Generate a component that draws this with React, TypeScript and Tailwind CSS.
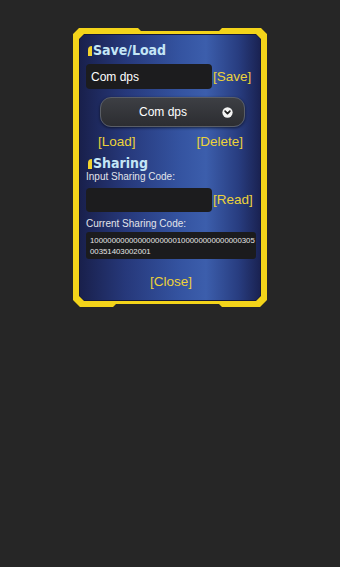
import React from "react";

const frameClip =
  "[clip-path:polygon(6px_0,65px_0,68px_3px,146px_3px,149px_0,188px_0,194px_6px,194px_272px,187px_279px,149px_279px,146px_276px,43px_276px,40px_279px,7px_279px,0_272px,0_6px)]";

function Heading({ children }: { children: React.ReactNode }) {
  return (
    <div className="flex items-center pl-[2px] text-[14px] font-semibold leading-[15px] text-[#c4e6f6] font-['DejaVu_Sans_Condensed','DejaVu_Sans',sans-serif]">
      <span className="mr-[1px] inline-block h-[10px] w-[4px] rounded-tl-[4px] bg-[#f2d22e]" />
      {children}
    </div>
  );
}

function Chevron() {
  return (
    <svg width="11" height="11" viewBox="0 0 12 12">
      <circle cx="6" cy="6" r="5.6" fill="#f4f4f4" />
      <path d="M3.4 4.6 L6 7.3 L8.6 4.6" fill="none" stroke="#222" strokeWidth="1.9" strokeLinecap="round" strokeLinejoin="round" />
    </svg>
  );
}

export default function App() {
  const yellowText = "text-[#ecd23a] text-[13.5px] leading-[16px]";

  return (
    <div className="flex min-h-[567px] w-full justify-center bg-[#262626] pt-[28px] font-['Liberation_Sans',Arial,sans-serif]">
      <div className={`h-[279px] w-[194px] bg-[#f3d41a] p-[6px] ${frameClip}`}>
        <div className="h-full w-full bg-[#15183a] p-[1px] [clip-path:polygon(5px_0,calc(100%-5px)_0,100%_5px,100%_calc(100%-5px),calc(100%-5px)_100%,5px_100%,0_calc(100%-5px),0_5px)]">
          <div className="flex h-full w-full flex-col bg-[linear-gradient(90deg,#19204c_0%,#26387a_25%,#3453a0_55%,#3c5eac_70%,#283d80_88%,#1a2252_100%)] pl-[6px] pr-[4px] pt-[8px] [clip-path:polygon(4px_0,calc(100%-4px)_0,100%_4px,100%_calc(100%-4px),calc(100%-4px)_100%,4px_100%,0_calc(100%-4px),0_4px)]">
            <Heading>Save/Load</Heading>

            <div className="mt-[6px] flex items-center">
              <div className="flex h-[25px] w-[126px] items-center rounded-[4px] bg-[#1c1c1e] pl-[5px] text-[12px] text-white">
                Com dps
              </div>
              <span className={`ml-[1px] ${yellowText}`}>[Save]</span>
            </div>

            <div className="ml-[14px] mt-[8px] flex h-[30px] w-[145px] items-center justify-center rounded-[11px] border border-[#5a5e66] bg-[linear-gradient(180deg,#3d3f44_0%,#2c2d31_100%)] shadow-[0_1px_3px_rgba(0,0,0,0.6)]">
              <span className="ml-[3px] flex-1 text-center text-[12px] text-white">Com dps</span>
              <span className="mr-[11px] flex">
                <Chevron />
              </span>
            </div>

            <div className="mt-[7px] flex justify-between pl-[12px] pr-[13px]">
              <span className={yellowText}>[Load]</span>
              <span className={yellowText}>[Delete]</span>
            </div>

            <div className="mt-[6px]">
              <Heading>Sharing</Heading>
            </div>
            <div className="text-[10px] leading-[12px] text-[#e2e4ea]">Input Sharing Code:</div>

            <div className="mt-[5px] flex items-center">
              <div className="h-[24px] w-[126px] rounded-[4px] bg-[#1c1c1e]" />
              <span className={`ml-[1px] ${yellowText}`}>[Read]</span>
            </div>

            <div className="mt-[6px] text-[10px] leading-[12px] text-[#e2e4ea]">Current Sharing Code:</div>
            <div className="mt-[2px] h-[27px] w-[170px] whitespace-nowrap rounded-[3px] bg-[#1b1b1d] px-[4px] pt-[3px] text-[7.8px] leading-[11px] text-[#e6e6e6]">
              <div>10000000000000000000100000000000000305</div>
              <div>00351403002001</div>
            </div>

            <div className="mt-[10px] text-center">
              <span className={yellowText}>[Close]</span>
            </div>
          </div>
        </div>
      </div>
    </div>
  );
}
